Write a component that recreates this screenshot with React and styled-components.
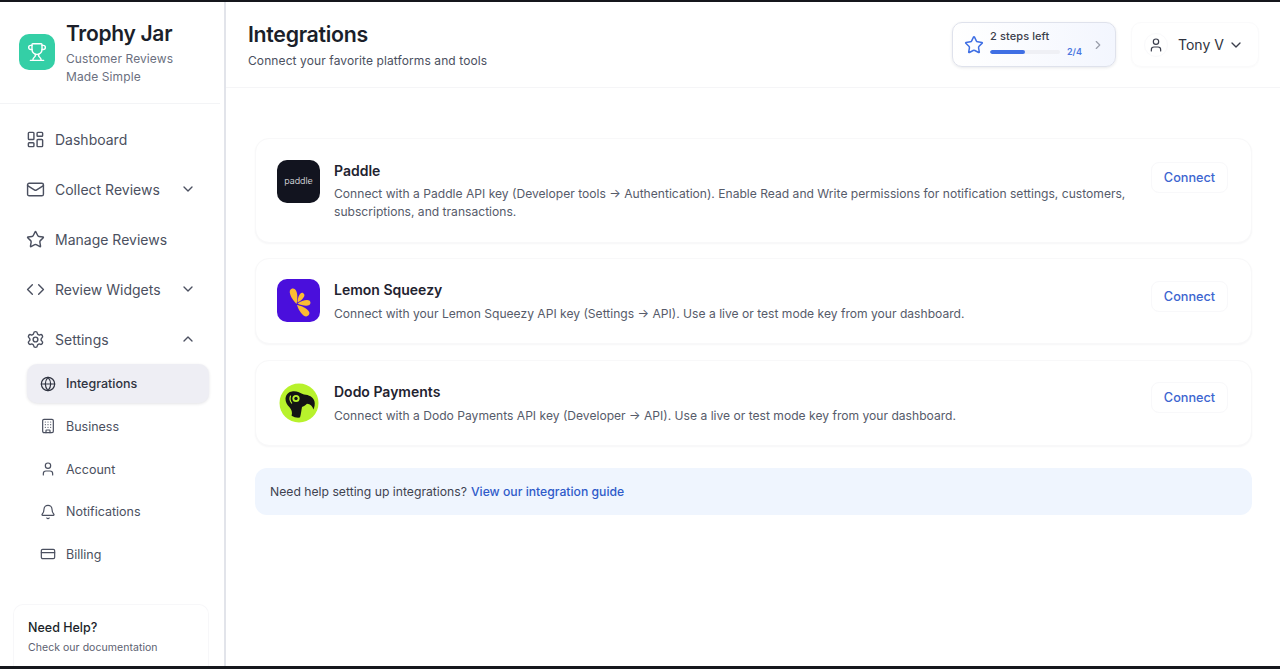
// React
import React from "react";

// Libraries
import styled, { createGlobalStyle } from "styled-components";

// Icons
import {
    LayoutDashboard, Mail, Star, Code, Settings, Globe, Building, User, Bell,
    CreditCard, Trophy, ChevronDown, ChevronUp, ChevronRight,
} from "lucide-react";

const Global = createGlobalStyle`
    * { box-sizing: border-box; }
    html, body { margin: 0; height: 100%; overflow: hidden; background: #fff; }
    body { font-family: Inter, "Liberation Sans", sans-serif; color: #1b1f2a; }
`;

const Frame = styled.div`
    width: 1280px;
    height: 669px;
    display: flex;
    flex-direction: column;
    border-top: 2px solid #15171c;
    border-bottom: 3px solid #15171c;
    overflow: hidden;
`;
const Shell = styled.div`
    flex: 1;
    min-height: 0;
    display: flex;
`;
const Sidebar = styled.aside`
    width: 226px;
    flex-shrink: 0;
    display: flex;
    flex-direction: column;
    border-right: 2px solid #e2e4ea;
    background: #fff;
`;
const Brand = styled.div`
    height: 102px;
    margin-right: 4px;
    padding: 19px 0 0 19px;
    display: flex;
    gap: 11px;
    border-bottom: 1px solid #f3f4f6;
`;
const BrandIcon = styled.div`
    width: 36px;
    height: 36px;
    margin-top: 13px;
    border-radius: 10px;
    background: #34cfa6;
    color: #fff;
    display: flex;
    align-items: center;
    justify-content: center;
`;
const BrandName = styled.div`
    font-size: 21px;
    line-height: 26px;
    font-weight: 600;
    letter-spacing: -0.3px;
    color: #1b1f2a;
`;
const BrandTag = styled.div`
    margin-top: 3px;
    font-size: 12px;
    line-height: 18px;
    color: #6b7080;
    letter-spacing: 0.1px;
`;
const Nav = styled.nav`
    flex: 1;
    padding: 10px 15px 0 26px;
    display: flex;
    flex-direction: column;
`;
const NavRow = styled.div`
    height: 50px;
    flex-shrink: 0;
    display: flex;
    align-items: center;
    gap: 10px;
    font-size: 14px;
    color: #4b5060;
    padding-right: 13px;
    & > span { flex: 1; }
`;
const SubList = styled.div`
    display: flex;
    flex-direction: column;
    margin-left: 1px;
`;
const SubRow = styled.div`
    height: ${p => (p.$active ? "39px" : "42.7px")};
    margin-bottom: ${p => (p.$active ? "2px" : "0")};
    display: flex;
    align-items: center;
    gap: 10px;
    padding-left: 13px;
    font-size: 12.5px;
    font-weight: ${p => (p.$active ? 500 : 400)};
    color: ${p => (p.$active ? "#2f3340" : "#4b5060")};
    border-radius: 10px;
    background: ${p => (p.$active ? "#eeeef4" : "transparent")};
    box-shadow: ${p => (p.$active ? "0 1px 3px rgba(30,35,60,0.12)" : "none")};
`;
const HelpCard = styled.div`
    height: 62px;
    margin: 0 15px 0 13px;
    padding: 14px 14px 0;
    border: 1px solid #f7f7f9;
    border-bottom: none;
    border-radius: 10px 10px 0 0;
`;
const HelpTitle = styled.div`
    font-size: 12.5px;
    line-height: 18px;
    font-weight: 500;
    color: #1b1f2a;
`;
const HelpText = styled.div`
    margin-top: 3px;
    font-size: 10.5px;
    line-height: 16px;
    color: #5c6170;
    letter-spacing: 0.05px;
`;
const Main = styled.main`
    flex: 1;
    min-width: 0;
    display: flex;
    flex-direction: column;
`;
const Header = styled.header`
    height: 86px;
    flex-shrink: 0;
    display: flex;
    align-items: flex-start;
    padding: 20px 21px 0 22px;
    border-bottom: 1px solid #f5f5f7;
`;
const HeaderText = styled.div`
    flex: 1;
    margin-top: -1px;
`;
const PageTitle = styled.h1`
    margin: 0;
    font-size: 21.3px;
    line-height: 26px;
    font-weight: 600;
    letter-spacing: -0.3px;
    color: #1b1f2a;
`;
const PageSub = styled.p`
    margin: 5px 0 0;
    font-size: 12px;
    line-height: 18px;
    color: #4b5060;
    letter-spacing: 0.1px;
`;
const StepsCard = styled.div`
    width: 164px;
    height: 45px;
    margin-right: 15px;
    padding: 0 10px 0 11px;
    display: flex;
    align-items: center;
    gap: 6px;
    border: 1px solid #dfe2ec;
    border-radius: 10px;
    background: linear-gradient(90deg, #ffffff, #f3f6fe);
    box-shadow: 0 1px 3px rgba(30, 35, 60, 0.1);
    color: #9a9eab;
`;
const StepsBody = styled.div`
    flex: 1;
    padding-bottom: 2px;
`;
const StepsLabel = styled.div`
    font-size: 11px;
    line-height: 14px;
    font-weight: 500;
    color: #3a3e4c;
    letter-spacing: 0.1px;
`;
const StepsBar = styled.div`
    display: flex;
    align-items: center;
    gap: 7px;
    margin-top: 3px;
    font-size: 9px;
    line-height: 12px;
    font-weight: 600;
    color: #4a76e0;
`;
const Track = styled.div`
    width: 70px;
    height: 4px;
    border-radius: 2px;
    background: #eff0f5;
    overflow: hidden;
`;
const Fill = styled.div`
    height: 100%;
    background: #3f6fe4;
    border-radius: 2px;
`;
const UserMenu = styled.div`
    width: 128px;
    height: 45px;
    padding: 0 14px 0 12px;
    display: flex;
    align-items: center;
    border: 1px solid #fafafb;
    border-radius: 10px;
    box-shadow: 0 1px 2px rgba(30, 35, 60, 0.025);
    color: #3a3e4c;
`;
const Avatar = styled.span`
    width: 24px;
    height: 24px;
    border-radius: 50%;
    border: 1px solid #f9f9fb;
    display: flex;
    align-items: center;
    justify-content: center;
`;
const UserName = styled.span`
    flex: 1;
    margin-left: 10px;
    font-size: 14px;
    color: #2f3340;
`;
const Content = styled.div`
    padding: 50px 28px 0 29px;
    display: flex;
    flex-direction: column;
`;
const Card = styled.section`
    display: flex;
    align-items: flex-start;
    height: ${p => p.$h}px;
    margin-bottom: ${p => p.$mb}px;
    padding: ${p => p.$top}px 23px 0 21px;
    gap: 14px;
    background: #fff;
    border: 1px solid #f8f8f9;
    border-radius: 14px;
    box-shadow: 0 1px 2px rgba(30, 35, 60, 0.04);
`;
const LogoBox = styled.div`
    width: 43px;
    height: 43px;
    flex-shrink: 0;
    border-radius: 10px;
    background: ${p => p.$bg};
    display: flex;
    align-items: center;
    justify-content: center;
`;
const PaddleMark = styled.span`
    font-size: 9px;
    font-weight: 300;
    color: #e8e9ec;
    margin-top: -2px;
`;
const CardBody = styled.div`
    flex: 1;
    min-width: 0;
`;
const CardTitle = styled.h3`
    margin: 0;
    font-size: 14px;
    line-height: 22px;
    font-weight: 600;
    color: #1f2330;
`;
const CardText = styled.p`
    margin: ${p => p.$gap}px 0 0;
    width: 805px;
    font-size: 12.1px;
    line-height: 18px;
    color: #565b6a;
`;
const ConnectBtn = styled.button`
    width: 77px;
    height: 31px;
    flex-shrink: 0;
    margin-top: ${p => p.$mt}px;
    padding: 0;
    border: 1px solid #f8f8fa;
    border-radius: 8px;
    background: #fff;
    font: 500 12.7px Inter, "Liberation Sans", sans-serif;
    color: #3c65d0;
`;
const HelpBanner = styled.div`
    height: 47px;
    margin-top: 6px;
    padding: 0 15px;
    display: flex;
    align-items: center;
    gap: 4px;
    border-radius: 12px;
    background: #eff5fe;
    font-size: 12.2px;
    color: #3f4350;
`;
const GuideLink = styled.a`
    font-weight: 500;
    color: #2f5bc9;
    text-decoration: none;
`;

const subItems = [
    { label: "Integrations", Icon: Globe, active: true },
    { label: "Business", Icon: Building },
    { label: "Account", Icon: User },
    { label: "Notifications", Icon: Bell },
    { label: "Billing", Icon: CreditCard },
];

// One lemon petal, drawn from its tip upward and rotated around the shared centre
const Petal = ({ x, y, angle, len, w }) => (
    <path
        d={`M0 0 C${-w * 0.7} ${-len * 0.4} ${-w} ${-len} 0 ${-len} C${w} ${-len} ${w * 0.7} ${-len * 0.4} 0 0Z`}
        transform={`translate(${x} ${y}) rotate(${angle})`}
    />
);

function LemonLogo() {
    return (
        <svg width="43" height="43" viewBox="0 0 43 43">
            <g fill="#fcbc33">
                <Petal x={19.5} y={25} angle={-16} len={16} w={5.4} />
                <Petal x={20.5} y={23.5} angle={32} len={11} w={3.8} />
                <Petal x={20.5} y={24.5} angle={86} len={13} w={4.4} />
                <Petal x={20} y={26} angle={132} len={15.5} w={5.4} />
            </g>
        </svg>
    );
}

function DodoLogo() {
    return (
        <svg width="40" height="40" viewBox="0 0 40 40">
            <circle cx="20" cy="20" r="19.5" fill="#b8f22c" />
            <path
                d="M6.5 15.5 C7 11 10 8.6 13 8.4 C17 7.6 21 9.6 25 11.6 C30 12 34 14 35.4 18 C36.2 21 35.6 24 34.4 26.4 C33.6 23.4 31.4 21 28 20.8 C26 22.8 24.2 23.6 23 24 C22.4 27.4 22 31 21 34.6 C18 35 15 34.4 12.6 32.8 C13.6 29.4 12.6 26.4 10.3 24 C8 22 6.4 18.8 6.5 15.5 Z"
                fill="#141414"
            />
            <circle cx="17" cy="15.5" r="3.6" fill="#b8f22c" />
            <circle cx="17" cy="15.5" r="1.7" fill="#141414" />
            <path d="M11.5 13 C10.6 15.4 11 18 12.6 20" fill="none" stroke="#b8f22c" strokeWidth="1.2" strokeLinecap="round" />
        </svg>
    );
}

export default function App() {
    return (
        <Frame>
            <Global />
            <Shell>
                <Sidebar>
                    <Brand>
                        <BrandIcon><Trophy size={20} strokeWidth={1.7} /></BrandIcon>
                        <div>
                            <BrandName>Trophy Jar</BrandName>
                            <BrandTag>Customer Reviews<br />Made Simple</BrandTag>
                        </div>
                    </Brand>
                    <Nav>
                        <NavRow><LayoutDashboard size={19} strokeWidth={1.8} /><span>Dashboard</span></NavRow>
                        <NavRow><Mail size={19} strokeWidth={1.8} /><span>Collect Reviews</span><ChevronDown size={16} /></NavRow>
                        <NavRow><Star size={19} strokeWidth={1.8} /><span>Manage Reviews</span></NavRow>
                        <NavRow><Code size={19} strokeWidth={1.8} /><span>Review Widgets</span><ChevronDown size={16} /></NavRow>
                        <NavRow><Settings size={19} strokeWidth={1.8} /><span>Settings</span><ChevronUp size={16} /></NavRow>
                        <SubList>
                            {subItems.map(({ label, Icon, active }) => (
                                <SubRow key={label} $active={active}>
                                    <Icon size={16} strokeWidth={1.8} />
                                    {label}
                                </SubRow>
                            ))}
                        </SubList>
                    </Nav>
                    <HelpCard>
                        <HelpTitle>Need Help?</HelpTitle>
                        <HelpText>Check our documentation</HelpText>
                    </HelpCard>
                </Sidebar>
                <Main>
                    <Header>
                        <HeaderText>
                            <PageTitle>Integrations</PageTitle>
                            <PageSub>Connect your favorite platforms and tools</PageSub>
                        </HeaderText>
                        <StepsCard>
                            <Star size={20} color="#3f6fe4" strokeWidth={1.8} />
                            <StepsBody>
                                <StepsLabel>2 steps left</StepsLabel>
                                <StepsBar>
                                    <Track><Fill style={{ width: "50%" }} /></Track>
                                    2/4
                                </StepsBar>
                            </StepsBody>
                            <ChevronRight size={14} />
                        </StepsCard>
                        <UserMenu>
                            <Avatar><User size={16} strokeWidth={1.8} /></Avatar>
                            <UserName>Tony V</UserName>
                            <ChevronDown size={16} />
                        </UserMenu>
                    </Header>
                    <Content>
                        <Card $h={105} $mb={15} $top={21}>
                            <LogoBox $bg="#12141f"><PaddleMark>paddle</PaddleMark></LogoBox>
                            <CardBody>
                                <CardTitle>Paddle</CardTitle>
                                <CardText $gap={3}>Connect with a Paddle API key (Developer tools → Authentication). Enable Read and Write permissions for notification settings, customers, subscriptions, and transactions.</CardText>
                            </CardBody>
                            <ConnectBtn $mt={2}>Connect</ConnectBtn>
                        </Card>
                        <Card $h={86} $mb={16} $top={20}>
                            <LogoBox $bg="#4a0fdc"><LemonLogo /></LogoBox>
                            <CardBody>
                                <CardTitle>Lemon Squeezy</CardTitle>
                                <CardText $gap={4}>Connect with your Lemon Squeezy API key (Settings → API). Use a live or test mode key from your dashboard.</CardText>
                            </CardBody>
                            <ConnectBtn $mt={2}>Connect</ConnectBtn>
                        </Card>
                        <Card $h={86} $mb={16} $top={20}>
                            <LogoBox $bg="transparent"><DodoLogo /></LogoBox>
                            <CardBody>
                                <CardTitle>Dodo Payments</CardTitle>
                                <CardText $gap={4}>Connect with a Dodo Payments API key (Developer → API). Use a live or test mode key from your dashboard.</CardText>
                            </CardBody>
                            <ConnectBtn $mt={1}>Connect</ConnectBtn>
                        </Card>
                        <HelpBanner>
                            Need help setting up integrations? <GuideLink>View our integration guide</GuideLink>
                        </HelpBanner>
                    </Content>
                </Main>
            </Shell>
        </Frame>
    );
}
